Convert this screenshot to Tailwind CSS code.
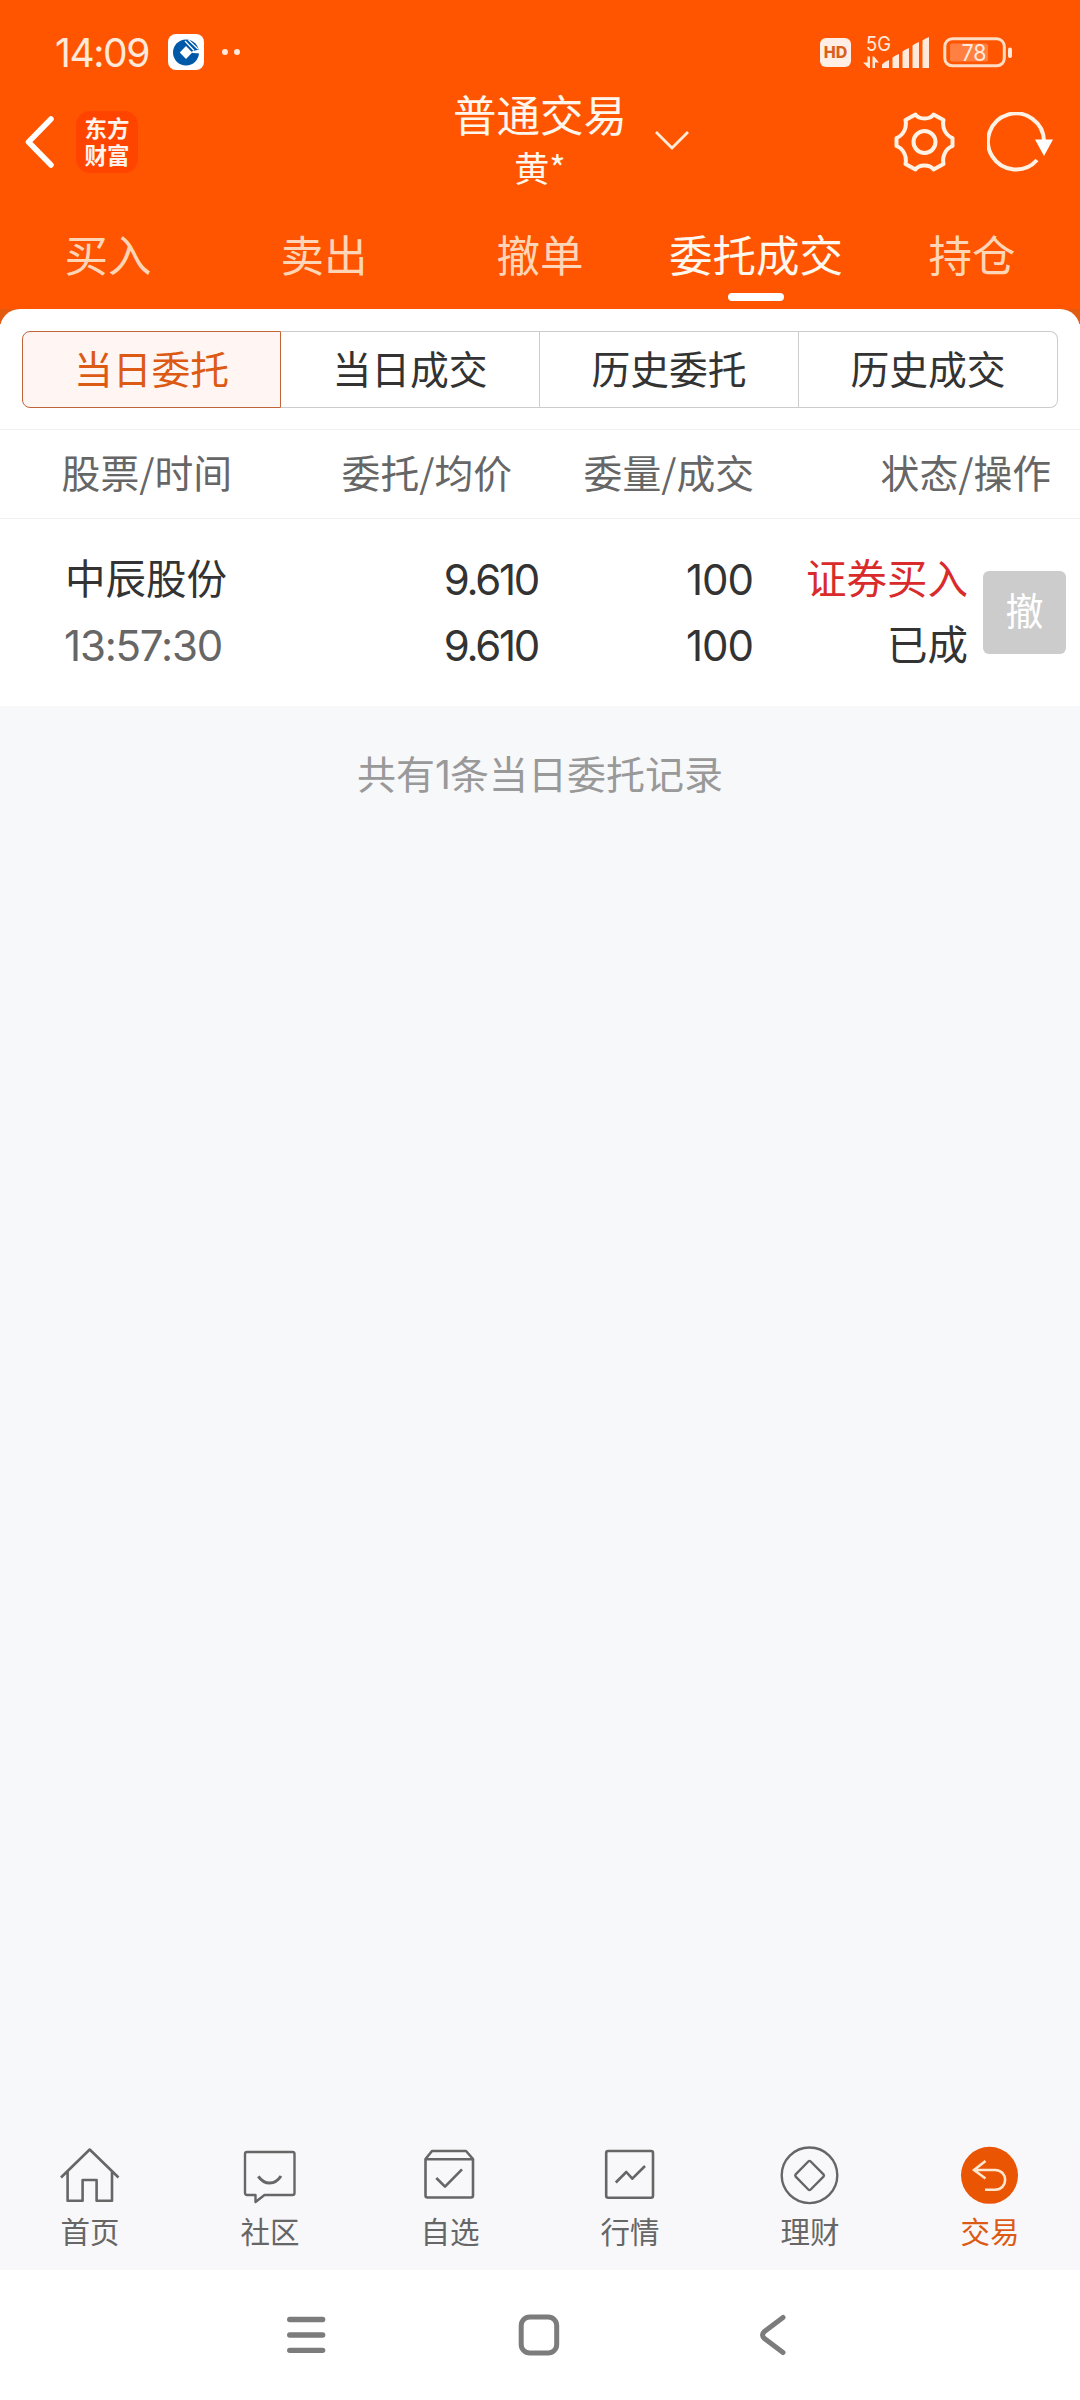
<!DOCTYPE html>
<html lang="zh-CN">
<head>
<meta charset="utf-8">
<title>普通交易</title>
<script src="https://cdn.jsdelivr.net/npm/@tailwindcss/browser@4"></script>
</head>
<body class="bg-[#f7f8fa]">
<div class="flex h-[2400px] w-[1080px] flex-col overflow-hidden bg-[#f7f8fa] font-['Noto_Sans_CJK_SC',sans-serif] leading-none text-[#333]">

  <header class="flex h-[309px] shrink-0 flex-col bg-[#ff5500] text-[#fff6ec]">
    <!-- status bar -->
    <div class="flex h-[84px] items-center justify-between pt-5 pr-[67px] pl-[55px]">
      <div class="flex items-center">
        <span class="w-[113px] font-[Inter,sans-serif] text-[39px] tracking-[-1.4px] text-[#ffe9da]">14:09</span>
        <svg class="h-9 w-9" viewBox="0 0 36 36">
          <rect width="36" height="36" rx="8" fill="#fff"/>
          <circle cx="18" cy="18.500" r="13" fill="#0058a8"/>
          <path d="M18 12l6.200 6.500-6.200 6.500-6.200-6.500z" fill="#fff"/>
          <path d="M23.500 17.500L33 15v4.500l-8.500-.5z" fill="#fff"/>
          <path d="M17 7l9 9.500M20.500 6l9.500 9" stroke="#fff" stroke-width="1.200" fill="none"/>
        </svg>
        <span class="ml-[18px] flex gap-[6px]"><i class="size-[6px] rounded-full bg-[#ffe9da]"></i><i class="size-[6px] rounded-full bg-[#ffe9da]"></i></span>
      </div>
      <div class="flex items-center">
        <span class="mr-3 flex h-[29px] w-[31px] items-center justify-center rounded-[6px] bg-[#ffeee5] font-[Inter,sans-serif] text-[16px] font-extrabold text-[#d9601c]">HD</span>
        <svg class="mr-[13px] h-[36px] w-[67px] overflow-visible" viewBox="0 0 67 36" fill="#ffe9da">
          <text x="3" y="17" font-family="Inter" font-size="20.500" textLength="25" lengthAdjust="spacingAndGlyphs">5G</text>
          <path d="M4.500 22.500h2.500V34H5.500L0 28.500h4.500zM9.500 34V22.500H11l5 6h-4V34z"/>
          <path d="M19 30.500q3-3.500 7-4.500v8h-7zM29.500 23.500q3-2.500 6.500-3.500v14h-6.500zM39.500 17.500q3-2.500 6.500-3.500v20h-6.500zM49.500 11.500q3-2.500 6.500-3.500v26h-6.500zM59.500 6.500q3-2.500 6.500-3.500v31h-6.500z"/>
        </svg>
        <svg class="h-[31px] w-[70px]" viewBox="0 0 70 31">
          <rect x="1.800" y="1.800" width="59.500" height="27" rx="7.500" fill="none" stroke="#ffdcc4" stroke-width="3"/>
          <rect x="7" y="6.500" width="38" height="18" rx="2" fill="#ff8040"/>
          <rect x="65" y="10.500" width="4" height="10.500" rx="2" fill="#ffe9da"/>
          <text x="18.500" y="24" font-family="Inter" font-size="23" textLength="25" lengthAdjust="spacingAndGlyphs" fill="#ffeadc">78</text>
        </svg>
      </div>
    </div>

    <!-- title bar -->
    <div class="grid h-[116px] grid-cols-3 items-center">
      <div class="flex items-center pl-[24px]">
        <svg class="h-[54px] w-[32px]" viewBox="0 0 32 54"><path d="M27 4L4.500 27 27 50" fill="none" stroke="#fff" stroke-width="5.500" stroke-linecap="round" stroke-linejoin="round"/></svg>
        <div class="ml-5 flex h-[62px] w-[62px] flex-col items-center justify-center rounded-[14px] bg-[#ff4400] pb-[3px] text-[22.5px] leading-[27px] font-bold text-[#fff4ec]"><span>东方</span><span>财富</span></div>
      </div>
      <div class="relative flex flex-col items-center pb-[4px]">
        <h1 class="text-[43.5px] leading-[53px]">普通交易</h1>
        <p class="text-[35px] leading-[54px]">黄*</p>
        <svg class="absolute top-[43px] left-[294px] h-[21px] w-[36px]" viewBox="0 0 36 21"><path d="M2 2l16 16L34 2" fill="none" stroke="#ffecd8" stroke-width="2.800"/></svg>
      </div>
      <div class="flex items-center justify-end gap-[31px] pr-[27px]">
        <svg class="h-[60px] w-[62px]" viewBox="0 0 62 60" fill="none" stroke="#fff2e4" stroke-width="4" stroke-linejoin="round">
          <path d="M21.500 2.500C25 7.800 36 7.800 39.500 2.500L49.500 8C48 15 51 23 58.500 26V34C51 37 48 45 49.500 52L39.500 57.500C36 52.200 25 52.200 21.500 57.500L11.500 52C13 45 10 37 2.500 34V26C10 23 13 15 11.500 8z"/>
          <circle cx="30.500" cy="30" r="11"/>
        </svg>
        <svg class="h-[60px] w-[66px]" viewBox="0 0 66 60"><path d="M57 29A28 28 0 1 0 50 48" fill="none" stroke="#fff2e4" stroke-width="4"/><path d="M48 27.500h18L57 44z" fill="#fff"/></svg>
      </div>
    </div>

    <!-- trade tabs -->
    <nav class="grid h-[109px] grid-cols-5 text-center text-[43.5px] leading-[107px] text-[#ffd5b8]">
      <span>买入</span><span>卖出</span><span>撤单</span>
      <span class="relative text-[#fff8ee]">委托成交<i class="absolute bottom-[8px] left-[80px] h-[8px] w-[56px] rounded-full bg-white"></i></span>
      <span>持仓</span>
    </nav>
  </header>

  <main class="flex-1">
    <div class="bg-[linear-gradient(#e35b10_0_15px,#fff_15px)]">
      <div class="rounded-t-[20px] bg-white px-[22px] pt-[22px] pb-[21px]">
        <div class="grid h-[77px] grid-cols-4 text-center text-[38.8px] leading-[70px]">
          <span class="rounded-l-[8px] border border-[#c0653a] bg-[#fff6f3] text-[#dc5a14]">当日委托</span>
          <span class="border-y border-r border-[#ccc]">当日成交</span>
          <span class="border-y border-r border-[#ccc]">历史委托</span>
          <span class="rounded-r-[8px] border-y border-r border-[#ccc]">历史成交</span>
        </div>
      </div>
    </div>
    <div class="flex h-[90px] border-y border-[#f0f0f0] bg-white text-right text-[38.8px] leading-[83px] text-[#666]">
      <span class="w-[232px]">股票/时间</span><span class="w-[280px]">委托/均价</span><span class="w-[242px]">委量/成交</span><span class="w-[297px]">状态/操作</span>
    </div>
    <div class="flex h-[187px] bg-white pt-[28px] text-[40.5px] leading-[66px]">
      <div class="flex w-[240px] flex-col pl-[65px]"><span class="-mt-[3px] mb-[3px]">中辰股份</span><span class="-ml-px font-[Inter,sans-serif] text-[42px] tracking-[-1.2px] text-[#666]">13:57:30</span></div>
      <div class="flex w-[298px] flex-col text-right font-[Inter,sans-serif] text-[42px] tracking-[-2.3px]"><span>9.610</span><span>9.610</span></div>
      <div class="flex w-[215px] flex-col text-right font-[Inter,sans-serif] text-[42px] tracking-[-1px]"><span>100</span><span>100</span></div>
      <div class="-mt-[3px] flex w-[215px] flex-col text-right"><span class="text-[#d92b2b]">证券买入</span><span>已成</span></div>
      <button class="mt-[24px] ml-[15px] flex h-[83px] w-[83px] justify-center rounded-[6px] bg-[#ccc] text-[38px] leading-[76px] text-white">撤</button>
    </div>
    <p class="pt-[41px] text-center text-[39px] leading-[50px] text-[#999]">共有<span class="font-[Inter,sans-serif] tracking-[-1px]">1</span>条当日委托记录</p>
  </main>

  <!-- app tab bar -->
  <nav class="grid h-[130px] shrink-0 grid-cols-6 bg-[#f8f8fa] pt-[5px] text-[29.5px] leading-[51px] text-[#666]">
    <div class="flex flex-col items-center">
      <svg class="size-[60px]" viewBox="0 0 60 60" fill="none" stroke="#666" stroke-width="2.600" stroke-linejoin="round"><path d="M1 32.500L29.700 4.500 58.500 32.500M7.600 26v29.700h15V35h14v20.700H52V26"/></svg><span>首页</span>
    </div>
    <div class="flex flex-col items-center">
      <svg class="size-[60px]" viewBox="0 0 60 60" fill="none" stroke="#666" stroke-width="2.400" stroke-linejoin="round"><path d="M7 7h45.500a2 2 0 0 1 2 2v39a2 2 0 0 1-2 2h-28l-9 7v-7H7a2 2 0 0 1-2-2V9a2 2 0 0 1 2-2z"/><path d="M18.300 31.300Q23 38 29.700 38T41 31" stroke-width="3"/></svg><span>社区</span>
    </div>
    <div class="flex flex-col items-center">
      <svg class="size-[60px]" viewBox="0 0 60 60" fill="none" stroke="#666" stroke-width="2.600" stroke-linejoin="round"><path d="M5.500 14L12 6h34l7 8v36.500a2 2 0 0 1-2 2h-43.500a2 2 0 0 1-2-2zM5.500 14.300H53M16.300 33l8.700 8.700L42 24.300"/></svg><span>自选</span>
    </div>
    <div class="flex flex-col items-center">
      <svg class="size-[60px]" viewBox="0 0 60 60" fill="none" stroke="#666" stroke-width="2.600" stroke-linejoin="round"><rect x="6.200" y="6" width="46.800" height="46.800" rx="2"/><path d="M15.800 37.500L26.300 27l6 6.700L45 21"/></svg><span>行情</span>
    </div>
    <div class="flex flex-col items-center">
      <svg class="size-[60px]" viewBox="0 0 60 60" fill="none" stroke="#666" stroke-width="2.400" stroke-linejoin="round"><circle cx="29.500" cy="30.300" r="27.800"/><path d="M28.300 16.500q1.200-1.200 2.400 0l12.800 12.800q1 1.200 0 2.400L30.700 44.500q-1.200 1.200-2.400 0L15.700 31.700q-1-1.200 0-2.400z"/></svg><span>理财</span>
    </div>
    <div class="flex flex-col items-center text-[#dc5a14]">
      <svg class="size-[60px]" viewBox="0 0 60 60" fill="none"><circle cx="29.500" cy="30.300" r="28.500" fill="#ea5504"/><path d="M25.500 16L14 25l11.500 8.500M14 25h21c13.500 0 13.500 19.700 0 19.700H25" stroke="#ffe6d0" stroke-width="2.600"/></svg><span>交易</span>
    </div>
  </nav>

  <!-- system navigation -->
  <div class="flex h-[130px] shrink-0 items-center justify-center gap-[189px] bg-white pr-[2px]">
    <svg class="size-[44px]" viewBox="0 0 44 44" stroke="#7c7c7c" stroke-width="5.300" stroke-linecap="round"><path d="M5.700 6.500h33M5.700 22h33M5.700 37.300h33"/></svg>
    <svg class="size-[44px]" viewBox="0 0 44 44" fill="none" stroke="#7c7c7c" stroke-width="5"><rect x="4.200" y="4" width="35.500" height="36" rx="8.500"/></svg>
    <svg class="size-[44px]" viewBox="0 0 44 44" fill="none" stroke="#7c7c7c" stroke-width="5" stroke-linecap="round"><path d="M33 4.500L14.500 18.500q-4 3.500 0 7L33 39.500"/></svg>
  </div>
</div>
</body>
</html>
